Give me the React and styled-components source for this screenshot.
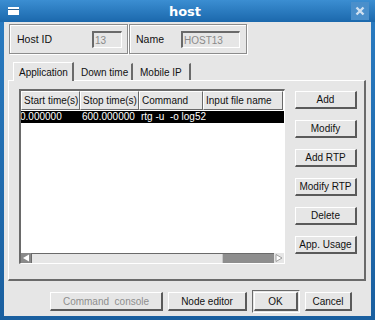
import styled, { createGlobalStyle } from "styled-components";

const Global = createGlobalStyle`
  body {
    margin: 0;
    background: #1d5f9c;
    font-family: "Liberation Sans", Arial, sans-serif;
  }
`;

const Window = styled.div`
  width: 375px;
  height: 320px;
  box-sizing: border-box;
  display: flex;
  flex-direction: column;
  background: linear-gradient(#2a7cc2, #1a5f9f);
  padding: 0 4px 4px 4px;
`;

const TitleBar = styled.div`
  height: 22px;
  display: flex;
  align-items: center;
  background: linear-gradient(#3b8ed2, #1b68ac);
  margin: 0 -4px;
  padding: 0 6px 0 8px;
`;

const WinIcon = styled.div`
  width: 11px;
  height: 6px;
  background: #fff;
  border-top: 2px solid #fff;
  box-shadow: inset 0 1px 0 #2b5f90;
`;

const Title = styled.div`
  flex: 1;
  text-align: center;
  color: #fff;
  font-weight: bold;
  font-size: 13px;
  font-family: "DejaVu Sans", sans-serif;
`;

const CloseBtn = styled.div`
  width: 18px;
  height: 18px;
  background: #4a8fcb;
  display: flex;
  align-items: center;
  justify-content: center;
`;

const Body = styled.div`
  flex: 1;
  background: #e6e6e6;
  display: flex;
  flex-direction: column;
  font-size: 10px;
  color: #111;
`;

const TopRow = styled.div`
  display: flex;
  padding: 2px 0 0 5px;
`;

const Group = styled.div`
  width: ${p => p.$w}px;
  height: 30px;
  box-sizing: border-box;
  border: 1px solid #8c8c8c;
  box-shadow: inset 1px 1px 0 #fff, 1px 1px 0 #fff;
  display: flex;
  align-items: center;
  padding-left: ${p => p.$pl}px;
  margin-right: 1px;
`;

const GroupLabel = styled.span`
  width: ${p => p.$w}px;
  font-size: 10.5px;
`;

const Field = styled.div`
  width: ${p => p.$w}px;
  height: 17px;
  box-sizing: border-box;
  border-top: 2px solid #6a6a6a;
  border-left: 2px solid #6a6a6a;
  border-bottom: 1px solid #fff;
  border-right: 1px solid #fff;
  color: #8a8a8a;
  padding: 2px 0 0 1px;
`;

const TabBar = styled.div`
  display: flex;
  align-items: flex-end;
  height: 19px;
  margin: 7px 0 0 9px;
`;

const Tab = styled.div`
  width: ${p => p.$w}px;
  height: ${p => (p.$active ? 19 : 17)}px;
  box-sizing: border-box;
  padding-left: ${p => (p.$active ? 5 : 4)}px;
  display: flex;
  align-items: center;
  border-left: 1px solid ${p => (p.$active ? "#fff" : "#e6e6e6")};
  border-top: 1px solid ${p => (p.$active ? "#fff" : "#e6e6e6")};
  border-right: 2px solid #6a6a6a;
  margin-right: 2px;
  position: relative;
  z-index: 1;
  margin-bottom: ${p => (p.$active ? -1 : 0)}px;
  background: #e6e6e6;
  white-space: nowrap;
`;

const Panel = styled.div`
  margin-left: 4px;
  width: 358px;
  height: 201px;
  box-sizing: border-box;
  border-top: 1px solid #fff;
  border-left: 1px solid #fff;
  border-right: 2px solid #6a6a6a;
  border-bottom: 2px solid #6a6a6a;
  display: flex;
  padding: 8px 0 0 10px;
  gap: 10px;
`;

const Table = styled.div`
  width: 266px;
  height: 175px;
  box-sizing: border-box;
  border-top: 2px solid #6a6a6a;
  border-left: 2px solid #6a6a6a;
  border-bottom: 1px solid #fff;
  border-right: 1px solid #fff;
  background: #fff;
  display: flex;
  flex-direction: column;
  overflow: hidden;
`;

const HeaderRow = styled.div`
  display: flex;
  height: 19px;
`;

const HeadCell = styled.div`
  width: ${p => p.$w}px;
  flex-shrink: 0;
  box-sizing: border-box;
  background: #e6e6e6;
  border-top: 1px solid #fff;
  border-left: 1px solid #fff;
  border-right: 1px solid #6a6a6a;
  border-bottom: 1px solid #6a6a6a;
  padding: 3px 0 0 2px;
  white-space: nowrap;
  overflow: hidden;
`;

const SelRow = styled.div`
  display: flex;
  height: 12px;
  background: #000;
  color: #fff;
  margin-top: 1px;
  line-height: 12px;
`;

const Cell = styled.div`
  width: ${p => p.$w}px;
  flex-shrink: 0;
  padding-left: ${p => p.$pl}px;
  box-sizing: border-box;
  white-space: nowrap;
  overflow: hidden;
`;

const Spacer = styled.div`
  flex: 1;
`;

const ScrollBar = styled.div`
  height: 10px;
  display: flex;
  background: #e6e6e6;
`;

const Trough = styled.div`
  flex: 1;
  display: flex;
  justify-content: flex-end;
  border-top: 1px solid #6a6a6a;
  border-left: 1px solid #6a6a6a;
  box-sizing: border-box;
`;

const Thumb = styled.div`
  width: 51px;
  background: #8e8e8e;
  border-left: 1px solid #c8c8c8;
`;

const Arrow = styled.div`
  width: 10px;
  height: 10px;
  background: ${p => (p.$dark ? "#8a8a8a" : "#e6e6e6")};
  display: flex;
  align-items: center;
  justify-content: center;
`;

const BtnCol = styled.div`
  display: flex;
  flex-direction: column;
  gap: 11px;
  padding-top: 2px;
`;

const Btn = styled.div`
  width: ${p => p.$w || 62}px;
  height: ${p => p.$h || 18}px;
  box-sizing: border-box;
  display: flex;
  align-items: center;
  justify-content: center;
  background: #e6e6e6;
  border-top: 1px solid #fff;
  border-left: 1px solid #fff;
  border-right: 2px solid #5a5a5a;
  border-bottom: 2px solid #5a5a5a;
  color: ${p => (p.$disabled ? "#8e8e8e" : "#111")};
  white-space: nowrap;
`;

const BottomRow = styled.div`
  display: flex;
  align-items: center;
  margin: 9px 0 0 46px;
  gap: 5px;
`;

const DefaultFrame = styled.div`
  border-top: 1px solid #6a6a6a;
  border-left: 1px solid #6a6a6a;
  border-right: 1px solid #fff;
  border-bottom: 1px solid #fff;
  padding: 1px;
`;

const cols = [59, 59, 64, 80];

export default function App() {
  return (
    <Window>
      <Global />
      <TitleBar>
        <WinIcon />
        <Title>host</Title>
        <CloseBtn>
          <svg width="10" height="10" viewBox="0 0 10 10">
            <path d="M1.5 1.5 L8.5 8.5 M8.5 1.5 L1.5 8.5" stroke="#cfe0f0" strokeWidth="2.4" />
          </svg>
        </CloseBtn>
      </TitleBar>
      <Body>
        <TopRow>
          <Group $w={119} $pl={7}>
            <GroupLabel $w={75}>Host ID</GroupLabel>
            <Field $w={30}>13</Field>
          </Group>
          <Group $w={118} $pl={6}>
            <GroupLabel $w={45}>Name</GroupLabel>
            <Field $w={59}>HOST13</Field>
          </Group>
        </TopRow>
        <TabBar>
          <Tab $active $w={61}>Application</Tab>
          <Tab $w={57}>Down time</Tab>
          <Tab $w={56}>Mobile IP</Tab>
        </TabBar>
        <Panel>
          <Table>
            <HeaderRow>
              <HeadCell $w={cols[0]}>Start time(s)</HeadCell>
              <HeadCell $w={cols[1]}>Stop time(s)</HeadCell>
              <HeadCell $w={cols[2]}>Command</HeadCell>
              <HeadCell $w={cols[3]}>Input file name</HeadCell>
            </HeaderRow>
            <SelRow>
              <Cell $w={cols[0]} $pl={0} style={{ textIndent: "-1px" }}>0.000000</Cell>
              <Cell $w={cols[1]} $pl={2}>600.000000</Cell>
              <Cell $w={cols[2] + cols[3]} $pl={2}>rtg -u&nbsp;&nbsp;-o log52</Cell>
            </SelRow>
            <Spacer />
            <ScrollBar>
              <Arrow $dark>
                <svg width="8" height="8" viewBox="0 0 8 8">
                  <path d="M1 4 L7 0.5 L7 7.5 Z" fill="#fff" />
                </svg>
              </Arrow>
              <Trough>
                <Thumb />
              </Trough>
              <Arrow>
                <svg width="8" height="8" viewBox="0 0 8 8">
                  <path d="M7 4 L1 0.5 L1 7.5 Z" fill="#fff" stroke="#8a8a8a" strokeWidth="0.8" />
                </svg>
              </Arrow>
            </ScrollBar>
          </Table>
          <BtnCol>
            <Btn>Add</Btn>
            <Btn>Modify</Btn>
            <Btn>Add RTP</Btn>
            <Btn>Modify RTP</Btn>
            <Btn>Delete</Btn>
            <Btn>App. Usage</Btn>
          </BtnCol>
        </Panel>
        <BottomRow>
          <Btn $w={113} $h={19} $disabled>Command&nbsp;&nbsp;console</Btn>
          <Btn $w={79} $h={19}>Node editor</Btn>
          <DefaultFrame>
            <Btn $w={44} $h={19}>OK</Btn>
          </DefaultFrame>
          <Btn $w={47} $h={19}>Cancel</Btn>
        </BottomRow>
      </Body>
    </Window>
  );
}
